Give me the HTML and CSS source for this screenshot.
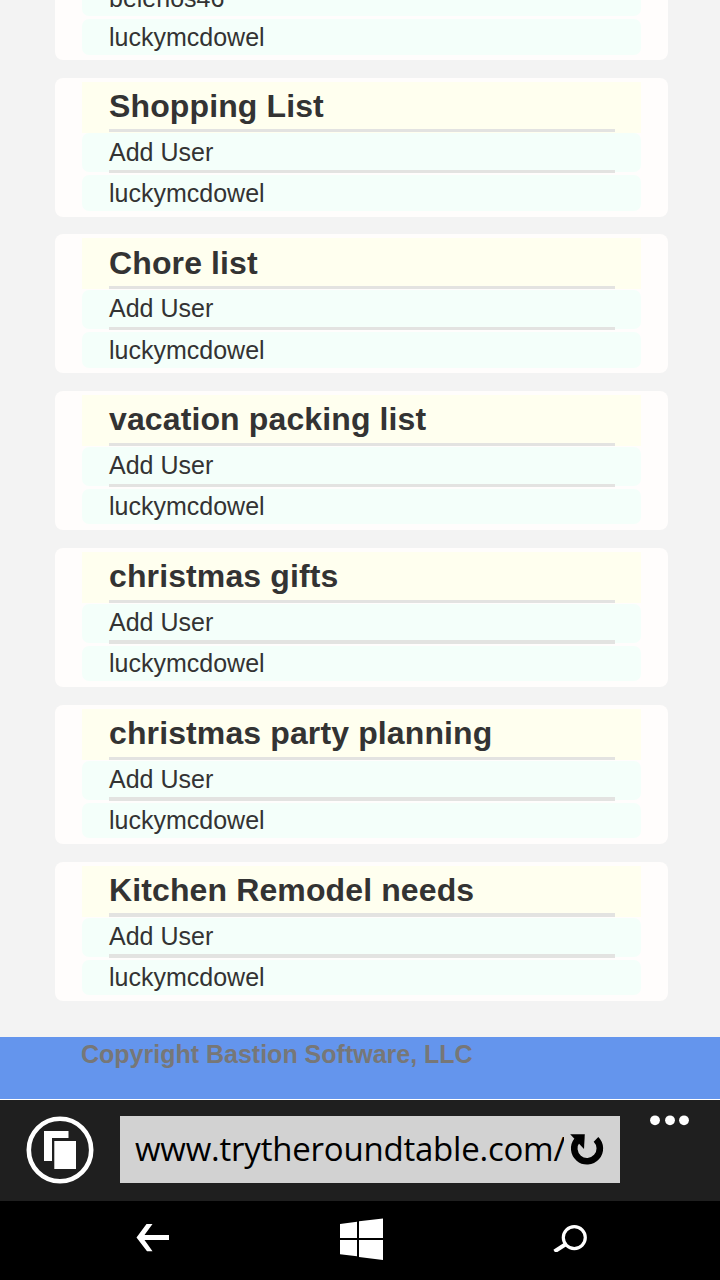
FILE: index.html
```html
<!DOCTYPE html>
<html lang="en">
<head>
<meta charset="utf-8">
<title>Round Table</title>
<link rel="stylesheet" href="styles.css">
</head>
<body>
<div class="screen">
<main class="lists">
  <section class="card first"><h2 class="title">Recipes</h2><hr class="rule"><p class="row">belenos46</p><hr class="rule hidden"><p class="row last">luckymcdowel</p></section>
  <section class="card shopping"><h2 class="title">Shopping List</h2><hr class="rule"><p class="row">Add User</p><hr class="rule"><p class="row last">luckymcdowel</p></section>
  <section class="card chores"><h2 class="title">Chore list</h2><hr class="rule"><p class="row">Add User</p><hr class="rule"><p class="row last">luckymcdowel</p></section>
  <section class="card"><h2 class="title">vacation packing list</h2><hr class="rule"><p class="row">Add User</p><hr class="rule"><p class="row last">luckymcdowel</p></section>
  <section class="card"><h2 class="title">christmas gifts</h2><hr class="rule"><p class="row">Add User</p><hr class="rule"><p class="row last">luckymcdowel</p></section>
  <section class="card"><h2 class="title">christmas party planning</h2><hr class="rule"><p class="row">Add User</p><hr class="rule"><p class="row last">luckymcdowel</p></section>
  <section class="card"><h2 class="title">Kitchen Remodel needs</h2><hr class="rule"><p class="row">Add User</p><hr class="rule"><p class="row last">luckymcdowel</p></section>
</main>
<footer class="copyright">Copyright Bastion Software, LLC</footer>
<div class="browser">
  <svg class="tabs" width="68" height="68" viewBox="0 0 68 68"><circle cx="34" cy="34" r="31.2" fill="none" stroke="#fff" stroke-width="4.6"/><path d="M18 15h24.500v7H26v23h-8z" fill="#fff"/><path d="M28.300 25H50V53H28.300z" fill="#fff"/></svg>
  <div class="address"><span class="url">www.trytheroundtable.com/</span>
    <svg class="reload" width="36" height="34" viewBox="0 0 36 34"><path d="M27 7.300A12.800 12.800 0 1 1 8 8.500" fill="none" stroke="#000" stroke-width="6.600"/><path d="M1.200 2.200H15.800L15 17z" fill="#000"/></svg>
  </div>
  <svg class="more" width="40" height="12" viewBox="0 0 40 12"><g fill="#fff"><circle cx="5" cy="6.300" r="4.900"/><circle cx="20" cy="6.300" r="4.900"/><circle cx="34" cy="6.300" r="4.900"/></g></svg>
</div>
<nav class="keys">
  <svg class="back" width="34" height="28" viewBox="0 0 34 28"><path d="M10.500 0H16.500L8.500 11H33v5H8.500L16.500 27.300h-5.500L.5 13.500z" fill="#fff"/></svg>
  <svg class="home" width="44" height="42" viewBox="0 0 44 42"><path d="M0 6L17 3.800V20H0zM19 3.300L43 .5V20H19zM0 22H17V38.300L0 36.200zM19 22H43V42L19 39z" fill="#fff"/></svg>
  <svg class="search" width="34" height="28" viewBox="0 0 34 28"><circle cx="21.300" cy="13.600" r="11" fill="none" stroke="#fff" stroke-width="3.200"/><path d="M13 20L1.500 27.500" stroke="#fff" stroke-width="4"/></svg>
</nav>
</div>
</body>
</html>
```
FILE: styles.css
```css
body { margin: 0; background: #f3f3f3; color: #333; font-family: "Liberation Sans", Arial, sans-serif; }
.screen { width: 720px; height: 1280px; overflow: hidden; display: flex; flex-direction: column; }
.lists { height: 1037px; overflow: hidden; display: flex; flex-direction: column; justify-content: flex-end; gap: 17.9px; padding: 0 52px 36px 55px; box-sizing: border-box; }
.card { flex: none; height: 139px; box-sizing: border-box; padding: 4px 27px 0; border-radius: 8px; background: #fffdfc; }
.title, .row { margin: 0; padding-left: 27px; white-space: nowrap; }
.title { height: 51px; background: #ffffef; font-size: 32px; line-height: 49.6px; letter-spacing: .12px; }
.row { height: 39px; margin-top: 1px; border-radius: 7px; background: #f4fffa; font-size: 25px; line-height: 37px; }
.row.last { height: 35.500px; margin-top: 2px; line-height: 35.200px; }
.first { padding-top: 5px; }
.first .row { line-height: 43px; }
.shopping .row { line-height: 39px; }
.chores .title { line-height: 51px; }
.first .row.last, .shopping .row.last, .chores .row.last { line-height: 37px; }
.rule { position: relative; height: 3.400px; margin: -3.600px 26px .2px 27px; border: 0; background: #e3e3e1; }
.row + .rule { margin-top: -2.600px; }
.hidden { visibility: hidden; }
.copyright { height: 62px; box-sizing: border-box; padding: 2px 0 0 81px; background: #6495ed; color: #777; font-size: 25px; font-weight: bold; line-height: 30px; }
.browser { height: 102px; box-sizing: border-box; border-top: 1px solid #fff; background: #1f1f1f; display: flex; align-items: flex-start; padding: 16px 30px 0 26px; }
.tabs { margin-right: 26px; }
.address { width: 500px; height: 67px; background: #d2d2d2; display: flex; align-items: center; box-sizing: border-box; padding-left: 15px; color: #000; }
.url { width: 429px; overflow: hidden; white-space: nowrap; font: 33px/63px "Open Sans", "Noto Sans", sans-serif; letter-spacing: -.22px; padding-bottom: 2px; }
.reload { margin: 0 0 2px 5px; }
.more { margin: -2px 0 0 30px; }
.keys { height: 79px; background: #000; display: flex; align-items: flex-start; padding-left: 136px; }
.back { margin-top: 23px; }
.home { margin: 17px 0 0 170px; }
.search { margin: 23px 0 0 169px; }
```
